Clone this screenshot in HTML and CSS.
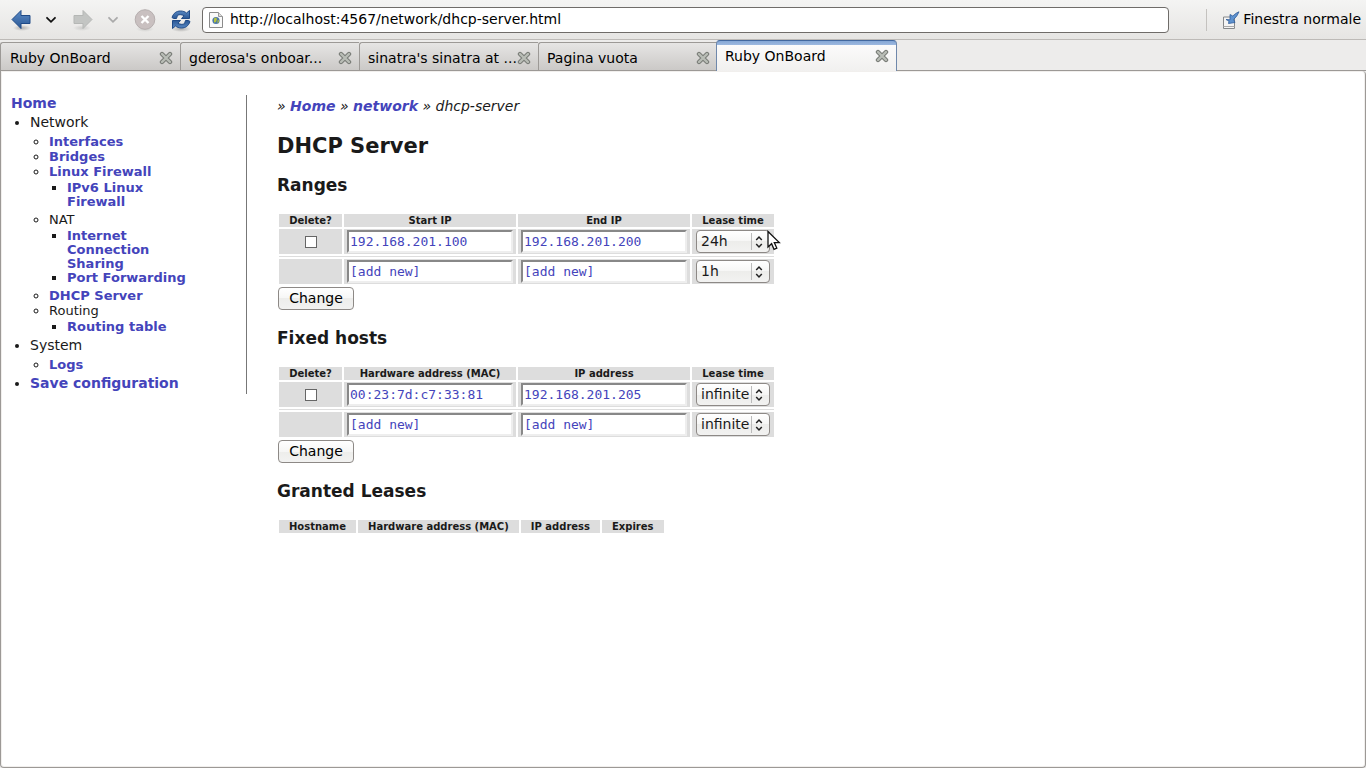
FILE: index.html
```html
<!DOCTYPE html>
<html lang="en">
<head>
<meta charset="utf-8">
<title>Ruby OnBoard</title>
<link rel="stylesheet" href="styles.css">
</head>
<body>
<svg class="defs" aria-hidden="true">
  <defs>
    <linearGradient id="blue" x1="0" y1="0" x2="0" y2="1"><stop offset="0" stop-color="#5b8bc6"/><stop offset="1" stop-color="#2a5794"/></linearGradient>
    <radialGradient id="shade"><stop offset="0" stop-color="#000" stop-opacity=".25"/><stop offset="1" stop-color="#000" stop-opacity="0"/></radialGradient>
    <symbol id="close" viewBox="0 0 14 14"><path d="M3 3l8 8M11 3l-8 8" stroke="#787b76" stroke-width="4.400" stroke-linecap="round"/><path d="M3 3l8 8M11 3l-8 8" stroke="#b9bdb6" stroke-width="2.400" stroke-linecap="round"/></symbol>
    <symbol id="updown" viewBox="0 0 8 14"><path d="M1.200 5L4 2l2.800 3M1.200 9L4 12l2.800-3" fill="none" stroke="#222" stroke-width="1.500"/></symbol>
    <symbol id="chevron" viewBox="0 0 12 8"><path d="M2 1.800L6 5.800L10 1.800" fill="none" stroke="currentColor" stroke-width="1.800" stroke-linecap="round"/></symbol>
  </defs>
</svg>
<header class="toolbar">
  <button class="tool back" aria-label="Back"><svg width="22" height="24" viewBox="0 0 22 24"><ellipse cx="12" cy="20" rx="9" ry="3" fill="url(#shade)"/><path d="M2 11.500L11 2.500V7.500H20V15.500H11V20.500Z" fill="url(#blue)" stroke="#1f4a87" stroke-linejoin="round"/></svg></button>
  <button class="tool menu" aria-label="Back history"><svg width="12" height="8"><use href="#chevron"/></svg></button>
  <button class="tool forward" aria-label="Forward" disabled><svg width="22" height="24" viewBox="0 0 22 24"><ellipse cx="10" cy="20" rx="9" ry="3" fill="url(#shade)" opacity=".5"/><path d="M20 11.500L11 2.500V7.500H2V15.500H11V20.500Z" fill="#c3c5c3" stroke="#b5b7b5" stroke-linejoin="round"/></svg></button>
  <button class="tool menu" aria-label="Forward history" disabled><svg width="12" height="8"><use href="#chevron"/></svg></button>
  <button class="tool stop" aria-label="Stop" disabled><svg width="22" height="24" viewBox="0 0 22 24"><ellipse cx="11" cy="21" rx="9" ry="3" fill="url(#shade)" opacity=".5"/><circle cx="11" cy="11.500" r="9.800" fill="#c9c0c0" stroke="#b5aeae"/><path d="M7.500 8l7 7M14.500 8l-7 7" stroke="#fff" stroke-width="2.400"/></svg></button>
  <button class="tool reload" aria-label="Reload"><svg width="22" height="24" viewBox="0 0 22 24"><ellipse cx="11" cy="21" rx="10" ry="3" fill="url(#shade)"/><g id="turn"><path d="M2 9.500C3.500 5 6.500 3 10.500 3C13 3 15 3.800 16.500 5L19.500 2.500V10.500H11.500L14 7.800C12 6.600 9.500 6.200 7.500 7.300L6.500 10.500H3.500Z" fill="url(#blue)" stroke="#1f4a87" stroke-linejoin="round"/></g><use href="#turn" transform="rotate(180 11 11.500)"/></svg></button>
  <div class="address">
    <svg width="14" height="16" viewBox="0 0 14 16"><path d="M.5.5H9.500L13.500 4.500V15.500H.5Z" fill="#fafafa" stroke="#8b8b8b"/><path d="M9.500.5V4.500H13.500" fill="#ddd" stroke="#999"/><circle cx="7" cy="8.500" r="3.600" fill="#4d78a8"/><path d="M5 6.500l2-1 1 1.500-1 3-2 .5zM8.500 8.500l1.500-.5-.5 2.500-1 .5z" fill="#b8c43a"/></svg>
    <input type="text" aria-label="Address" value="http://localhost:4567/network/dhcp-server.html">
  </div>
  <button class="tool normal"><svg width="18" height="18" viewBox="0 0 18 18"><path d="M1.500 6H12.500V17.500H1.500Z" fill="#f4f4f4" stroke="#85888a"/><path d="M1.500 15.500H12.500" stroke="#aaa"/><path d="M17 .8Q14.500 1.500 10.800 5L8 3.500V8.800L4 8.500 7 10 6.500 12.500 13 11.500 11.700 8.500Q15.500 5 17 .8Z" fill="#5e92cf" stroke="#2f5c99" stroke-width=".8"/></svg><span>Finestra normale</span></button>
</header>
<div class="tabs">
  <div class="tab"><a href="#">Ruby OnBoard</a><button aria-label="Close tab"><svg width="14" height="14"><use href="#close"/></svg></button></div>
  <div class="tab"><a href="#">gderosa's onboar...</a><button aria-label="Close tab"><svg width="14" height="14"><use href="#close"/></svg></button></div>
  <div class="tab"><a href="#">sinatra's sinatra at ...</a><button aria-label="Close tab"><svg width="14" height="14"><use href="#close"/></svg></button></div>
  <div class="tab"><a href="#">Pagina vuota</a><button aria-label="Close tab"><svg width="14" height="14"><use href="#close"/></svg></button></div>
  <div class="tab active"><a href="#">Ruby OnBoard</a><button aria-label="Close tab"><svg width="14" height="14"><use href="#close"/></svg></button></div>
</div>
<div class="page">
  <nav class="side">
    <a href="#">Home</a>
    <ul class="level1">
      <li>Network
        <ul class="level2">
          <li><a href="#">Interfaces</a></li>
          <li><a href="#">Bridges</a></li>
          <li><a href="#">Linux Firewall</a>
            <ul class="level3"><li><a href="#">IPv6 Linux Firewall</a></li></ul></li>
          <li>NAT
            <ul class="level3"><li><a href="#">Internet Connection Sharing</a></li><li><a href="#">Port Forwarding</a></li></ul></li>
          <li><a href="#">DHCP Server</a></li>
          <li>Routing
            <ul class="level3"><li><a href="#">Routing table</a></li></ul></li>
        </ul></li>
      <li>System
        <ul class="level2"><li><a href="#">Logs</a></li></ul></li>
      <li><a href="#">Save configuration</a></li>
    </ul>
  </nav>
  <main>
    <p class="crumbs">» <a href="#">Home</a> » <a href="#">network</a> » dhcp-server</p>
    <h1>DHCP Server</h1>
    <h2>Ranges</h2>
    <form>
      <table class="edit">
        <thead><tr><th class="del">Delete?</th><th class="field">Start IP</th><th class="field">End IP</th><th class="lease">Lease time</th></tr></thead>
        <tbody>
          <tr><td class="del"><input type="checkbox" aria-label="Delete range"></td><td><input type="text" aria-label="Start IP" value="192.168.201.100"></td><td><input type="text" aria-label="End IP" value="192.168.201.200"></td><td class="lease"><span class="select"><select aria-label="Lease time"><option>24h</option></select><svg width="8" height="14"><use href="#updown"/></svg></span><svg class="pointer" width="14" height="21" viewBox="0 0 14 21"><path d="M1 1.500V17L4.600 13.700 7 19.300 9.800 18.100 7.300 12.600H12.300Z" fill="#fff" stroke="#111" stroke-width="1.300"/></svg></td></tr>
          <tr class="rule"><td colspan="4"></td></tr>
          <tr><td></td><td><input type="text" aria-label="New start IP" value="[add new]"></td><td><input type="text" aria-label="New end IP" value="[add new]"></td><td class="lease"><span class="select"><select aria-label="New lease time"><option>1h</option></select><svg width="8" height="14"><use href="#updown"/></svg></span></td></tr>
        </tbody>
      </table>
      <button class="change" type="button">Change</button>
    </form>
    <h2>Fixed hosts</h2>
    <form>
      <table class="edit">
        <thead><tr><th class="del">Delete?</th><th class="field">Hardware address (MAC)</th><th class="field">IP address</th><th class="lease">Lease time</th></tr></thead>
        <tbody>
          <tr><td class="del"><input type="checkbox" aria-label="Delete host"></td><td><input type="text" aria-label="Hardware address" value="00:23:7d:c7:33:81"></td><td><input type="text" aria-label="IP address" value="192.168.201.205"></td><td class="lease"><span class="select"><select aria-label="Lease time"><option>infinite</option></select><svg width="8" height="14"><use href="#updown"/></svg></span></td></tr>
          <tr class="rule"><td colspan="4"></td></tr>
          <tr><td></td><td><input type="text" aria-label="New hardware address" value="[add new]"></td><td><input type="text" aria-label="New IP address" value="[add new]"></td><td class="lease"><span class="select"><select aria-label="New lease time"><option>infinite</option></select><svg width="8" height="14"><use href="#updown"/></svg></span></td></tr>
        </tbody>
      </table>
      <button class="change" type="button">Change</button>
    </form>
    <h2>Granted Leases</h2>
    <table class="leases">
      <thead><tr><th>Hostname</th><th>Hardware address (MAC)</th><th>IP address</th><th>Expires</th></tr></thead>
    </table>
  </main>
</div>
</body>
</html>
```
FILE: styles.css
```css
* { box-sizing: border-box; }
body {
  margin: 0;
  min-height: 100vh;
  display: flex;
  flex-direction: column;
  background: #edeceb;
  color: #1a1a1a;
  font: 14px/17px "DejaVu Sans", sans-serif;
}
button, input, select { font: inherit; color: inherit; margin: 0; padding: 0; }
svg { display: block; flex: none; }
.defs { position: absolute; width: 0; height: 0; }

.toolbar {
  height: 40px;
  display: flex;
  align-items: center;
  padding: 0 5px 0 10px;
  border-bottom: 1px solid #bdbab7;
  background: linear-gradient(#f4f4f3, #e6e5e3);
  color: #000;
}
.tool { border: 0; background: none; display: flex; align-items: center; }
.menu { margin: 0 15px 0 13px; color: #111; }
.menu:disabled { color: #aaa; }
.stop { margin-right: 14px; }
.address {
  flex: 1;
  height: 26px;
  margin: 0 37px 0 10px;
  padding: 0 6px;
  display: flex;
  align-items: center;
  gap: 7px;
  border: 1px solid #6f6c69;
  border-radius: 4px;
  background: #fff;
}
.address input { flex: 1; min-width: 0; border: 0; background: none; outline: 0; }
.normal {
  height: 22px;
  padding-left: 15px;
  gap: 3px;
  border-left: 1px solid #c4c2bf;
  white-space: nowrap;
}

.tabs { display: flex; align-items: flex-end; height: 31px; border-bottom: 1px solid #9c9996; }
.tab {
  width: 179px;
  height: 28px;
  padding: 3px 7px 0 8px;
  display: flex;
  align-items: center;
  justify-content: space-between;
  border: 1px solid #9c9996;
  border-width: 1px 0 0 1px;
  border-radius: 3px 0 0 0;
  background: linear-gradient(#e6e5e4, #cbc9c7);
}
.tab:first-child { width: 180px; padding-left: 9px; }
.tab a { color: #000; font-weight: normal; white-space: nowrap; }
.tab button { border: 0; background: none; }
.tab.active {
  width: 181px;
  height: 31px;
  margin: 0 0 -1px -1px;
  padding-top: 0;
  border: 1px solid #6f88ab;
  border-top-color: #42689f;
  border-bottom: 0;
  border-radius: 4px 4px 0 0;
  background: linear-gradient(#84a7d6 0, #9db9e0 4px, #fbfbfb 4px, #f1f0ef);
}

.page {
  flex: 1;
  display: flex;
  align-items: flex-start;
  padding: 24px 10px;
  border: 1px solid #9c9996;
  border-top: 0;
  border-radius: 0 4px 4px 4px;
  background: #fff;
  box-shadow: inset 0 0 0 1px #f1efed;
}
a { color: #4444bb; font-weight: bold; text-decoration: none; }
.side {
  width: 236px;
  padding: 0 60px 2px 0;
  border-right: 1px solid #777;
}
.side ul { margin: 0; padding: 0; }
.side .level1 { margin-top: 2px; padding-left: 19px; list-style: disc; }
.side .level2 { margin: 3px 0; padding-left: 19px; list-style: circle; font-size: 13px; line-height: 15px; }
.side .level3 { margin: 2px 0 3px; padding-left: 18px; list-style: square; line-height: 14px; }

main { padding-left: 30px; }
.crumbs { margin: 3px 0 0; font-style: italic; }
h1 { margin: 20px 0 0; font-size: 21px; line-height: 22px; }
h2 { margin: 18px 0 17px; font-size: 17px; line-height: 20px; }
table { border-spacing: 2px; border-collapse: separate; }
th, td { background: #ddd; padding: 0; }
th { height: 13px; font-size: 10px; line-height: 13px; padding: 0 10px; white-space: nowrap; }
.edit { table-layout: fixed; width: 499px; }
.edit th { padding: 0; }
.edit .del { width: 63px; text-align: center; }
.edit .field { width: 172px; }
.edit td { height: 25px; padding: 1px 3px; }
.edit .rule td { height: 1px; padding: 0; }
.edit input[type="text"] {
  display: block;
  width: 100%;
  height: 23px;
  padding: 0 1px;
  border: 2px solid #888;
  border-right-color: #eee;
  border-bottom-color: #eee;
  background: #fff;
  color: #4444bb;
  font: 13px/17px "DejaVu Sans Mono", monospace;
}
.edit input[type="checkbox"] {
  appearance: none;
  display: block;
  width: 12px;
  height: 12px;
  margin: 0 auto;
  border: 1px solid #666;
  background: #fff;
}
.lease { position: relative; }
.select { position: relative; display: block; width: 74px; margin-left: 1px; }
.select select, .change {
  appearance: none;
  width: 100%;
  height: 23px;
  border: 1px solid #8d8986;
  border-radius: 4px;
  background: linear-gradient(#fff, #f6f6f5 50%, #ededeb 50%, #f2f2f1);
}
.select select { display: block; padding-left: 4px; }
.select svg { position: absolute; right: 7px; top: 5px; pointer-events: none; }
.select::after { content: ""; position: absolute; right: 18px; top: 3px; height: 17px; border-left: 1px solid #bbb; }
.pointer { position: absolute; left: 75px; top: 1px; pointer-events: none; }
.change { display: block; width: 76px; margin: 1px 0 0 1px; color: #000; }
```
